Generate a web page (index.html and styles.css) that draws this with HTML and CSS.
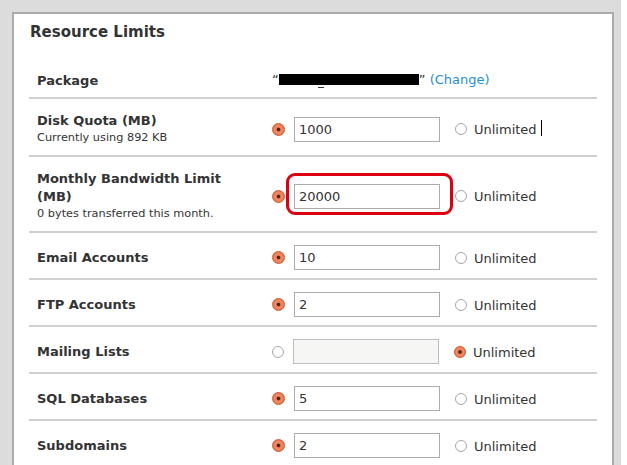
FILE: index.html
```html
<!DOCTYPE html>
<html>
<head>
<meta charset="utf-8">
<link rel="stylesheet" href="styles.css">
</head>
<body>
<div class="page">
  <div class="panel">
    <h2 class="title">Resource Limits</h2>
    <div class="table">
      <div class="row row-pkg">
        <div class="label"><div class="name">Package</div></div>
        <div class="value pkg">“<span class="redact"><span class="under"></span></span>” <a class="change" href="#">(Change)</a></div>
      </div>
      <div class="row">
        <div class="label"><div class="name">Disk Quota (MB)</div><div class="sub">Currently using 892 KB</div></div>
        <div class="value">
          <span class="radio on"></span>
          <span class="field"><span class="input">1000</span></span>
          <span class="unl"><span class="radio"></span><span class="unl-text">Unlimited</span><span class="caret"></span></span>
        </div>
      </div>
      <div class="row">
        <div class="label"><div class="name">Monthly Bandwidth Limit<br>(MB)</div><div class="sub">0 bytes transferred this month.</div></div>
        <div class="value">
          <span class="radio on"></span>
          <span class="field"><span class="input">20000</span><span class="highlight"></span></span>
          <span class="unl"><span class="radio"></span><span class="unl-text">Unlimited</span></span>
        </div>
      </div>
      <div class="row">
        <div class="label"><div class="name">Email Accounts</div></div>
        <div class="value">
          <span class="radio on"></span>
          <span class="field"><span class="input">10</span></span>
          <span class="unl"><span class="radio"></span><span class="unl-text">Unlimited</span></span>
        </div>
      </div>
      <div class="row">
        <div class="label"><div class="name">FTP Accounts</div></div>
        <div class="value">
          <span class="radio on"></span>
          <span class="field"><span class="input">2</span></span>
          <span class="unl"><span class="radio"></span><span class="unl-text">Unlimited</span></span>
        </div>
      </div>
      <div class="row">
        <div class="label"><div class="name">Mailing Lists</div></div>
        <div class="value">
          <span class="radio"></span>
          <span class="field"><span class="input disabled"></span></span>
          <span class="unl"><span class="radio on"></span><span class="unl-text">Unlimited</span></span>
        </div>
      </div>
      <div class="row">
        <div class="label"><div class="name">SQL Databases</div></div>
        <div class="value">
          <span class="radio on"></span>
          <span class="field"><span class="input">5</span></span>
          <span class="unl"><span class="radio"></span><span class="unl-text">Unlimited</span></span>
        </div>
      </div>
      <div class="row">
        <div class="label"><div class="name">Subdomains</div></div>
        <div class="value">
          <span class="radio on"></span>
          <span class="field"><span class="input">2</span></span>
          <span class="unl"><span class="radio"></span><span class="unl-text">Unlimited</span></span>
        </div>
      </div>
    </div>
  </div>
</div>
</body>
</html>
```
FILE: styles.css
```css
html, body {
  margin: 0;
  padding: 0;
  background: #ffffff;
  overflow: hidden;
}
body {
  font-family: "DejaVu Sans", sans-serif;
  color: #333333;
}
.page {
  width: 621px;
  height: 465px;
  box-sizing: border-box;
  background: #dcdcdc;
  padding: 12px 0 0 12px;
  overflow: hidden;
}
.panel {
  width: 602px;
  height: 460px;
  box-sizing: border-box;
  background: #ffffff;
  border: 2px solid #ababab;
  border-bottom: none;
  padding: 8px 0 0 15px;
}
.title {
  margin: 0 0 18px 1px;
  font-size: 15px;
  line-height: 20px;
  font-weight: bold;
  color: #333333;
}
.table {
  width: 568px;
}
.row {
  display: grid;
  grid-template-columns: 243px 1fr;
  align-items: center;
  border-bottom: 2px solid #d0d0d0;
}
.label {
  padding: 13px 8px 9px 8px;
}
.row-pkg .label {
  padding: 12px 8px 7px 8px;
}
.name {
  font-size: 13px;
  line-height: 18px;
  font-weight: bold;
  color: #333333;
}
.sub {
  font-size: 11.3px;
  line-height: 16px;
  color: #333333;
}
.value {
  display: flex;
  align-items: center;
  padding: 12px 0 8px 0;
  font-size: 13px;
}
.value.pkg {
  display: block;
  padding: 0;
  font-size: 13px;
  line-height: 18px;
  position: relative;
  top: 1px;
}
.redact {
  display: inline-block;
  width: 140px;
  height: 11px;
  background: #000000;
  vertical-align: -1px;
  position: relative;
}
.under {
  position: absolute;
  left: 39px;
  top: 13px;
  width: 6px;
  height: 1px;
  background: #333333;
}
.change {
  color: #1e8fd5;
  text-decoration: none;
}
.radio {
  display: inline-block;
  box-sizing: border-box;
  width: 12px;
  height: 12px;
  border-radius: 50%;
  border: 1px solid #a8a8a8;
  background: radial-gradient(circle at 50% 40%, #ffffff 0, #ffffff 55%, #ececec 100%);
  flex: none;
}
.radio.on {
  width: 13px;
  height: 13px;
  border: 1px solid #c9592f;
  background: radial-gradient(circle, #5a1f0c 0, #5a1f0c 1.3px, #e88060 2.3px, #f08a62 3.8px, #e4714a 6px);
}
.field {
  position: relative;
  margin-left: 9px;
  display: inline-block;
}
.input {
  display: block;
  box-sizing: border-box;
  width: 146px;
  height: 25px;
  border: 1px solid #ababab;
  background: #ffffff;
  padding: 0 4px;
  font-size: 13px;
  line-height: 23px;
  color: #333333;
}
.input.disabled {
  background: #f6f6f4;
  border-color: #bdbdbd;
}
.highlight {
  position: absolute;
  left: -8px;
  top: -11px;
  width: 167px;
  height: 42px;
  box-sizing: border-box;
  border: 3px solid #dc0010;
  border-radius: 9px;
}
.unl {
  display: flex;
  align-items: center;
  margin-left: 15px;
}
.unl .radio.on {
  width: 12px;
  height: 12px;
}
.unl-text {
  margin-left: 7px;
  font-size: 13px;
  line-height: 18px;
  color: #333333;
  position: relative;
  top: 1px;
}
.caret {
  display: inline-block;
  width: 1px;
  height: 16px;
  background: #000000;
  margin-left: 4px;
  position: relative;
  top: -1px;
}
```
